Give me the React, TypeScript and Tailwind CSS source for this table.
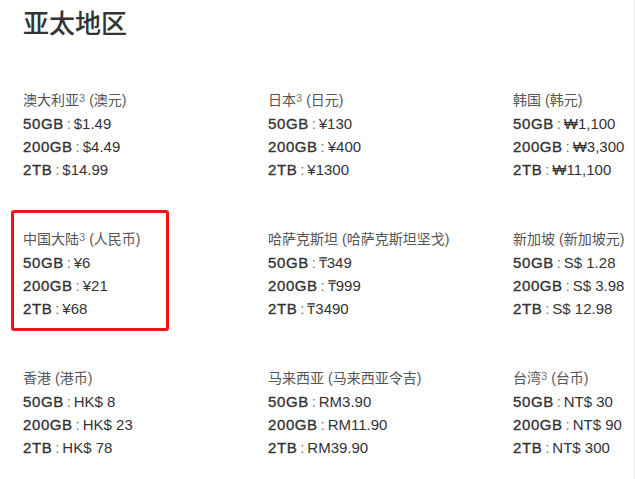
import React from "react";

type Region = {
  name: string;
  sup?: boolean;
  currency: string;
  prices: [string, string][];
  highlight?: boolean;
};

const rows: Region[][] = [
  [
    { name: "澳大利亚", sup: true, currency: "澳元", prices: [["50GB", "$1.49"], ["200GB", "$4.49"], ["2TB", "$14.99"]] },
    { name: "日本", sup: true, currency: "日元", prices: [["50GB", "¥130"], ["200GB", "¥400"], ["2TB", "¥1300"]] },
    { name: "韩国", currency: "韩元", prices: [["50GB", "₩1,100"], ["200GB", "₩3,300"], ["2TB", "₩11,100"]] },
  ],
  [
    { name: "中国大陆", sup: true, currency: "人民币", highlight: true, prices: [["50GB", "¥6"], ["200GB", "¥21"], ["2TB", "¥68"]] },
    { name: "哈萨克斯坦", currency: "哈萨克斯坦坚戈", prices: [["50GB", "₸349"], ["200GB", "₸999"], ["2TB", "₸3490"]] },
    { name: "新加坡", currency: "新加坡元", prices: [["50GB", "S$ 1.28"], ["200GB", "S$ 3.98"], ["2TB", "S$ 12.98"]] },
  ],
  [
    { name: "香港", currency: "港币", prices: [["50GB", "HK$ 8"], ["200GB", "HK$ 23"], ["2TB", "HK$ 78"]] },
    { name: "马来西亚", currency: "马来西亚令吉", prices: [["50GB", "RM3.90"], ["200GB", "RM11.90"], ["2TB", "RM39.90"]] },
    { name: "台湾", sup: true, currency: "台币", prices: [["50GB", "NT$ 30"], ["200GB", "NT$ 90"], ["2TB", "NT$ 300"]] },
  ],
];

const font = { fontFamily: '"Liberation Sans", "Noto Sans CJK SC", sans-serif' };

function Cell({ r }: { r: Region }) {
  return (
    <div className="relative">
      {r.highlight && (
        <div className="absolute left-[-12px] top-[-18px] w-[158px] h-[121px] border-[3px] border-[#f0151a] rounded-[3px]" />
      )}
      <div className="text-[14px] leading-[23px] text-[#555]">
        {r.name}
        {r.sup && <span className="text-[11px] align-top leading-[18px] text-[#777]">3</span>}
        <span className="ml-[4px]">(</span>
        {r.currency}
        <span>)</span>
      </div>
      {r.prices.map(([k, v]) => (
        <div key={k} className="text-[15px] leading-[23px] text-[#333]">
          <span className="tracking-[0.6px] [-webkit-text-stroke:0.35px_#333]">{k}</span>
          <span className="inline-block w-[10px] text-center text-[#777]">:</span>
          <span>{v}</span>
        </div>
      ))}
    </div>
  );
}

export default function App() {
  return (
    <div className="flex w-[635px] h-[479px] bg-white overflow-hidden" style={font}>
      <div className="flex-1 pl-[23px] pt-[5px]">
        <h1 className="text-[26px] leading-[39px] text-[#333] font-medium">亚太地区</h1>
        <div className="mt-[45px] grid grid-cols-[245px_245px_1fr] gap-y-[47px]">
          {rows.flat().map((r) => (
            <Cell key={r.name} r={r} />
          ))}
        </div>
      </div>
      <div className="w-[2px] bg-[#f2f2f2]" />
    </div>
  );
}
